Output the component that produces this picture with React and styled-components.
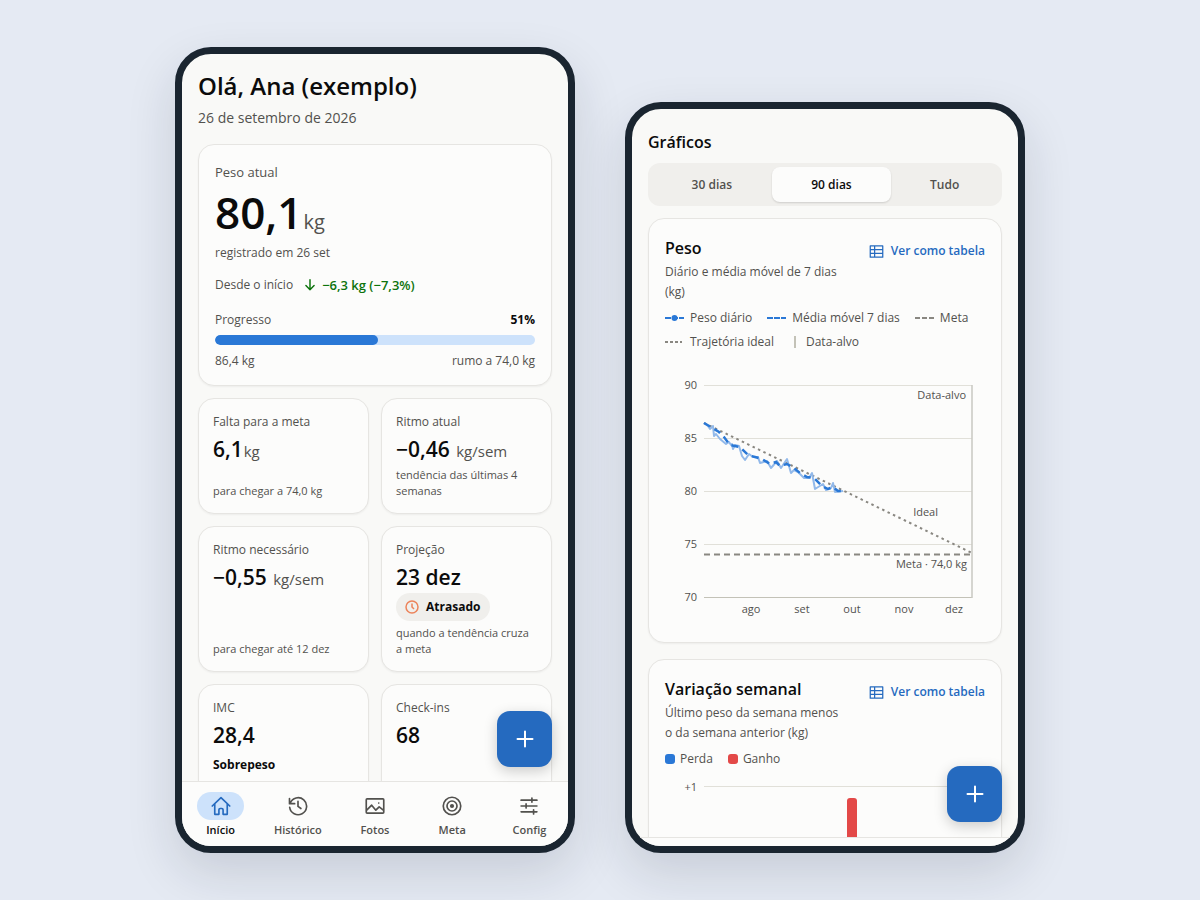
import React from "react";
import styled, { createGlobalStyle, css } from "styled-components";

const Global = createGlobalStyle`
  * { box-sizing: border-box; }
  body {
    margin: 0;
    background: #e5eaf3;
    color: #0b0b0b;
    font-family: "Open Sans", "Noto Sans", sans-serif;
    font-size: 12px;
    line-height: 20px;
  }
  h1, h2, h3, p { margin: 0; }
  button { font: inherit; border: 0; padding: 0; cursor: pointer; }
`;

const Stage = styled.main`
  min-height: 100vh;
  display: flex;
  justify-content: center;
  align-items: flex-end;
  gap: 50px;
  padding: 47px 24px;
`;

const Phone = styled.section`
  position: relative;
  flex: 0 1 400px;
  height: ${(p) => p.$height}px;
  display: flex;
  flex-direction: column;
  overflow: hidden;
  background: #f9f9f7;
  border: 7px solid #1a2530;
  border-radius: 36px;
  box-shadow: 0 20px 50px rgba(20, 30, 50, 0.14);
`;

const Screen = styled.div`
  flex: 1;
  min-height: 0;
  overflow: hidden;
  padding: ${(p) => p.$top}px 16px 0;
`;

const Greeting = styled.h1`
  font-size: 24px;
  line-height: 32px;
  font-weight: 600;
`;

const Today = styled.p`
  margin-top: 6px;
  font-size: 14px;
  line-height: 20px;
  color: #52514e;
`;

const Card = styled.article`
  background: #fcfcfb;
  border: 1px solid #e6e5e2;
  border-radius: 16px;
  box-shadow: 0 1px 2px rgba(0, 0, 0, 0.05);
`;

const Muted = styled.p`
  color: #52514e;
  font-size: ${(p) => (p.$large ? 13 : 12)}px;
  line-height: 20px;
`;

const Summary = styled(Card)`
  margin-top: 16px;
  padding: 17px 16px 14px;
  display: flex;
  flex-direction: column;
`;

const Hero = styled.p`
  margin: 4px 0 5px;
  font-size: 44px;
  line-height: 52px;
  font-weight: 600;
`;

const Unit = styled.span`
  margin-left: 1px;
  font-size: ${(p) => (p.$large ? 20 : 15)}px;
  line-height: 1;
  font-weight: 500;
  color: #52514e;
`;

const Since = styled.div`
  margin-top: 12px;
  display: flex;
  align-items: center;
  gap: 10px;
  color: #52514e;
`;

const Delta = styled.strong`
  display: flex;
  align-items: center;
  gap: 5px;
  font-size: 13px;
  font-weight: 600;
  color: #0c730c;
`;

const Between = styled.div`
  display: flex;
  justify-content: space-between;
  margin-top: ${(p) => p.$gap}px;
  color: #52514e;
  strong { color: #0b0b0b; font-weight: 700; }
`;

const Track = styled.div`
  height: 10px;
  margin-top: 5px;
  border-radius: 5px;
  background: #cde2fb;
  overflow: hidden;
`;

const Fill = styled.div`
  height: 100%;
  border-radius: 5px;
  background: #2a78d6;
`;

const Grid = styled.div`
  display: grid;
  grid-template-columns: 1fr 1fr;
  gap: 12px;
  margin-top: 12px;
`;

const Tile = styled(Card)`
  min-height: 116px;
  padding: 13px 14px 14px;
  display: flex;
  flex-direction: column;
  align-items: flex-start;
`;

const Value = styled.p`
  margin-top: 3px;
  font-size: 21px;
  line-height: 28px;
  font-weight: 600;
`;

const Note = styled.p`
  margin-top: auto;
  padding-top: 4px;
  color: #52514e;
  font-size: 11px;
  line-height: 16px;
`;

const Pill = styled.span`
  display: flex;
  align-items: center;
  gap: 7px;
  height: 28px;
  margin-top: 2px;
  padding: 0 10px 0 9px;
  border-radius: 14px;
  background: #f0efec;
  font-weight: 700;
`;

const Strong = styled.p`
  margin-top: 8px;
  line-height: 16px;
  font-weight: 700;
`;

const Nav = styled.nav`
  display: grid;
  grid-template-columns: repeat(5, 1fr);
  height: 65px;
  background: #fcfcfb;
  border-top: 1px solid #e6e5e2;
`;

const NavItem = styled.a`
  display: flex;
  flex-direction: column;
  align-items: center;
  padding-top: 10px;
  text-decoration: none;
  font-size: 11px;
  line-height: 20px;
  font-weight: 600;
  color: ${(p) => (p.$active ? "#0b0b0b" : "#52514e")};
`;

const NavIcon = styled.span`
  width: 47px;
  height: 28px;
  display: grid;
  place-items: center;
  border-radius: 14px;
  ${(p) => p.$active && css`background: #cde2fb; color: #256abf;`}
`;

const Fab = styled.button`
  position: absolute;
  right: 16px;
  bottom: ${(p) => p.$bottom}px;
  width: 55px;
  height: 56px;
  display: grid;
  place-items: center;
  border-radius: 13px;
  background: #256abf;
  color: #fff;
  box-shadow: 0 4px 14px rgba(0, 0, 0, 0.2);
`;

const Title = styled.h2`
  font-size: 16px;
  line-height: 24px;
  font-weight: 600;
`;

const Segments = styled.div`
  display: flex;
  margin-top: 9px;
  padding: 4px;
  border-radius: 12px;
  background: #f0efec;
`;

const Segment = styled.button`
  flex: ${(p) => p.$grow} 1 0;
  height: 35px;
  border-radius: 8px;
  background: ${(p) => (p.$active ? "#fcfcfb" : "transparent")};
  box-shadow: ${(p) => (p.$active ? "0 1px 2px rgba(0,0,0,0.14)" : "none")};
  color: ${(p) => (p.$active ? "#0b0b0b" : "#52514e")};
  font-weight: 600;
`;

const ChartCard = styled(Card)`
  margin-top: ${(p) => p.$gap}px;
  padding: 17px 16px 22px;
`;

const CardHead = styled.header`
  display: flex;
  justify-content: space-between;
  align-items: flex-start;
`;

const HeadText = styled.div`
  width: 180px;
  display: grid;
  gap: 2px;
`;

const TableButton = styled.button`
  display: flex;
  align-items: center;
  gap: 7px;
  margin-top: 5px;
  background: none;
  color: #256abf;
  line-height: 20px;
  font-weight: 600;
  white-space: nowrap;
`;

const Legend = styled.ul`
  list-style: none;
  margin: 6px 0 0;
  padding: 0;
  display: flex;
  flex-wrap: wrap;
  column-gap: 15px;
  row-gap: 4px;
  color: #52514e;
  li { display: flex; align-items: center; gap: 5px; white-space: nowrap; }
`;

const Swatch = styled.i`
  width: 10px;
  height: 10px;
  border-radius: 3px;
  background: ${(p) => p.$color};
`;

const Chart = styled.svg`
  display: block;
  width: 100%;
  height: auto;
  margin-top: ${(p) => p.$gap}px;
  overflow: visible;
  font-size: 11px;
  fill: #52514e;
`;

const HomeBar = styled.div`
  height: 9px;
  background: #fcfcfb;
  border-top: 1px solid #e6e5e2;
`;

const Icon = ({ size = 20, width = 2, children }) => (
  <svg width={size} height={size} viewBox="0 0 24 24" fill="none" stroke="currentColor"
    strokeWidth={width} strokeLinecap="round" strokeLinejoin="round" aria-hidden="true">{children}</svg>
);

const icons = {
  home: <path d="M1.500 12 12 2l10.500 10M4.500 9.500V22h5v-5.500a1.500 1.500 0 0 1 1.500-1.500h2a1.500 1.500 0 0 1 1.500 1.500V22h5V9.500" />,
  history: <><path d="M1.800 3v6.200H8M2.600 8.600A10.200 10.200 0 1 1 2 13.500" /><path d="M12 6.500V12.500l3.500 2.500" /></>,
  photo: <><rect x="1.500" y="3.500" width="21" height="17" rx="1" /><path d="m2 17 6-6 5 6 4-4 5 4M16.500 8.500h.01" /></>,
  target: <><circle cx="12" cy="12" r="10.500" /><circle cx="12" cy="12" r="6" /><circle cx="12" cy="12" r="1.500" fill="currentColor" /></>,
  sliders: <path d="M2.500 5h19M2.500 12h19M2.500 19h19M15.500 2.500v5M8.500 9.500v5M17.500 16.500v5" />,
};

const tabs = [["home", "Início"], ["history", "Histórico"], ["photo", "Fotos"], ["target", "Meta"], ["sliders", "Config"]];

const Plus = () => <Icon size={24}><path d="M12 4.500v15M4.500 12h15" /></Icon>;

const TableToggle = () => (
  <TableButton type="button">
    <Icon size={15}><path d="M2 3h20v18H2zM2 9h20M2 15h20M9 3v18" /></Icon>
    Ver como tabela
  </TableButton>
);

const Key = ({ color, dash, dot, w = 19 }) => (
  <svg width="20" height="8" viewBox="0 0 20 8" aria-hidden="true">
    <path d={`M0 4H${w}`} stroke={color} strokeWidth="2" strokeDasharray={dash} />
    {dot && <circle cx="9.500" cy="4" r="3" fill={color} />}
  </svg>
);

const yTicks = [[90, 20], [85, 73], [80, 126], [75, 179], [70, 232]];
const months = [["ago", 86], ["set", 137], ["out", 187], ["nov", 239], ["dez", 289]];

const daily = "39,58 43,61 45,64 48,61 49,71 51,69 55,74 61,79 64,77 66,80 67,79 68,84 70,80 74,81 77,91 80,95 84,89 88,92 93,92 95,98 102,96 106,103 112,96 116,103 118,100 122,94 126,108 129,105 133,107 139,113 144,113 147,108 150,124 158,119 161,125 166,123 168,118 170,127 178,126";
const average = "39,58 46,62 54,67 59,72 65,80 75,82 83,90 90,92 97,94 105,99 111,97 115,101 122,99 129,103 135,108 142,112 149,113 157,121 163,124 168,122 173,126 178,126";

const WeightChart = () => (
  <Chart $gap={13} viewBox="0 0 320 255" role="img" aria-label="Peso ao longo do tempo">
    {yTicks.map(([label, y]) => (
      <g key={label}>
        <path d={`M39 ${y}.5H307`} stroke={label === 70 ? "#c3c2b7" : "#e1e0d9"} />
        <text x="32" y={y + 4} textAnchor="end">{label}</text>
      </g>
    ))}
    <path d="M307 20v213" stroke="#c9c8c2" strokeWidth="1.500" />
    <path d="M39 189.500H307" stroke="#898781" strokeWidth="1.800" strokeDasharray="6 4" />
    <path d="M39 58 307 188" stroke="#898781" strokeWidth="2" strokeDasharray="2.500 3.500" />
    <polyline points={daily} fill="none" stroke="#92b9ea" strokeWidth="2" strokeLinejoin="round" />
    <polyline points={average} fill="none" stroke="#2a78d6" strokeWidth="2.500" strokeDasharray="7 5" />
    <text x="301" y="34" textAnchor="end">Data-alvo</text>
    <text x="273" y="151" textAnchor="end">Ideal</text>
    <text x="302" y="203" textAnchor="end">Meta · 74,0 kg</text>
    {months.map(([label, x]) => <text key={label} x={x} y="248" textAnchor="middle">{label}</text>)}
  </Chart>
);

const WeeklyChart = () => (
  <Chart $gap={8} viewBox="0 0 320 200" role="img" aria-label="Variação de peso por semana">
    <path d="M39 9.500H307" stroke="#e1e0d9" />
    <text x="32" y="14" textAnchor="end">+1</text>
    <path d="M182 120V24a3 3 0 0 1 3-3h4a3 3 0 0 1 3 3v96z" fill="#e34948" />
  </Chart>
);

export default function App() {
  return (
    <>
      <Global />
      <Stage>
        <Phone $height={806}>
          <Screen $top={16}>
            <Greeting>Olá, Ana (exemplo)</Greeting>
            <Today>26 de setembro de 2026</Today>
            <Summary>
              <Muted $large>Peso atual</Muted>
              <Hero>80,1<Unit $large>kg</Unit></Hero>
              <Muted>registrado em 26 set</Muted>
              <Since>
                Desde o início
                <Delta><Icon size={14} width={2.5}><path d="M12 3v17M5 13l7 7 7-7" /></Icon>−6,3 kg (−7,3%)</Delta>
              </Since>
              <Between $gap={15}>Progresso<strong>51%</strong></Between>
              <Track role="progressbar" aria-label="Progresso" aria-valuenow={51}><Fill style={{ width: "51%" }} /></Track>
              <Between $gap={6}><span>86,4 kg</span><span>rumo a 74,0 kg</span></Between>
            </Summary>
            <Grid>
              <Tile><Muted>Falta para a meta</Muted><Value>6,1<Unit>kg</Unit></Value><Note>para chegar a 74,0 kg</Note></Tile>
              <Tile><Muted>Ritmo atual</Muted><Value>−0,46 <Unit>kg/sem</Unit></Value><Note>tendência das últimas 4 semanas</Note></Tile>
              <Tile><Muted>Ritmo necessário</Muted><Value>−0,55 <Unit>kg/sem</Unit></Value><Note>para chegar até 12 dez</Note></Tile>
              <Tile>
                <Muted>Projeção</Muted>
                <Value>23 dez</Value>
                <Pill><svg width="14" height="14" viewBox="0 0 14 14" fill="none" stroke="#ec835a" strokeWidth="1.5" aria-hidden="true"><circle cx="7" cy="7" r="6" /><path d="M7 3.500V7l2 2" /></svg>Atrasado</Pill>
                <Note>quando a tendência cruza a meta</Note>
              </Tile>
              <Tile><Muted>IMC</Muted><Value>28,4</Value><Strong>Sobrepeso</Strong></Tile>
              <Tile><Muted>Check-ins</Muted><Value>68</Value></Tile>
            </Grid>
          </Screen>
          <Nav aria-label="Principal">
            {tabs.map(([icon, label], i) => (
              <NavItem key={label} href={`#${icon}`} $active={i === 0}>
                <NavIcon $active={i === 0}><Icon>{icons[icon]}</Icon></NavIcon>
                {label}
              </NavItem>
            ))}
          </Nav>
          <Fab type="button" aria-label="Adicionar peso" $bottom={79}><Plus /></Fab>
        </Phone>

        <Phone $height={751}>
          <Screen $top={21}>
            <Title>Gráficos</Title>
            <Segments>
              <Segment type="button" $grow={120}>30 dias</Segment>
              <Segment type="button" $grow={120} $active>90 dias</Segment>
              <Segment type="button" $grow={107}>Tudo</Segment>
            </Segments>
            <ChartCard $gap={12}>
              <CardHead>
                <HeadText><Title as="h3">Peso</Title><Muted>Diário e média móvel de 7 dias (kg)</Muted></HeadText>
                <TableToggle />
              </CardHead>
              <Legend>
                <li><Key color="#2a78d6" dash="6 1" dot />Peso diário</li>
                <li><Key color="#2a78d6" dash="6 1" />Média móvel 7 dias</li>
                <li><Key color="#898781" dash="5 2" />Meta</li>
                <li><Key color="#898781" dash="3 2" w={17} />Trajetória ideal</li>
                <li><svg width="12" height="12" aria-hidden="true"><path d="M6 0v12" stroke="#c3c2b7" strokeWidth="2" /></svg>Data-alvo</li>
              </Legend>
              <WeightChart />
            </ChartCard>
            <ChartCard $gap={16}>
              <CardHead>
                <HeadText><Title as="h3">Variação semanal</Title><Muted>Último peso da semana menos o da semana anterior (kg)</Muted></HeadText>
                <TableToggle />
              </CardHead>
              <Legend><li><Swatch $color="#2a78d6" />Perda</li><li><Swatch $color="#e34948" />Ganho</li></Legend>
              <WeeklyChart />
            </ChartCard>
          </Screen>
          <HomeBar />
          <Fab type="button" aria-label="Adicionar registro" $bottom={24}><Plus /></Fab>
        </Phone>
      </Stage>
    </>
  );
}
